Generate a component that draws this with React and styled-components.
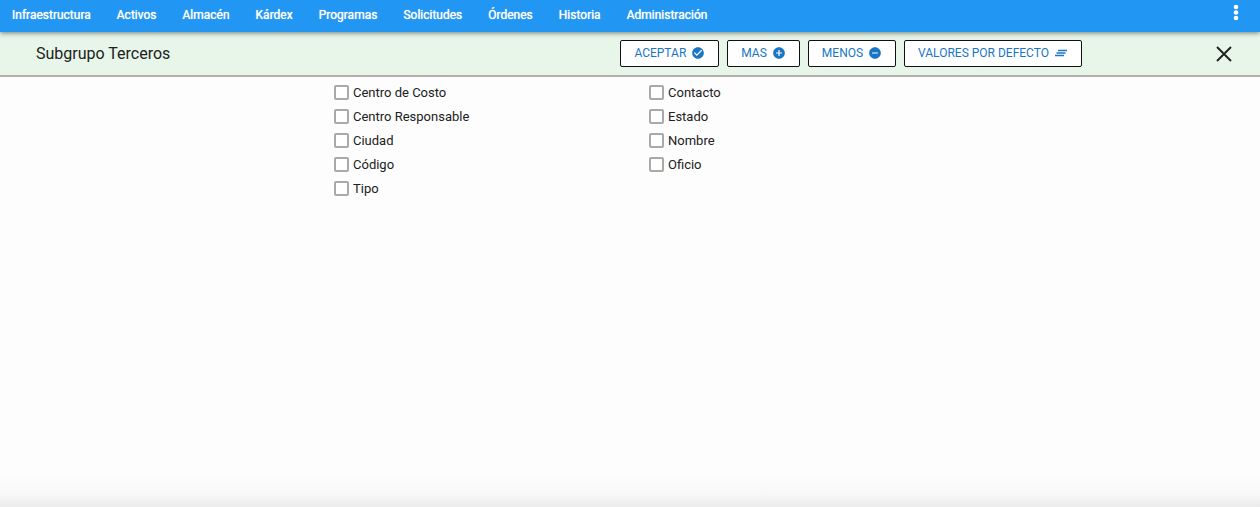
import React from "react";
import styled, { createGlobalStyle } from "styled-components";
import { MdCheckCircle, MdAddCircle, MdRemoveCircle } from "react-icons/md";

const GlobalStyle = createGlobalStyle`
  *, *::before, *::after { box-sizing: border-box; }
  body {
    margin: 0;
    background: #fdfdfd;
    color: #212121;
    font-family: Roboto, "Liberation Sans", sans-serif;
    font-size: 13px;
  }
`;

const Page = styled.div`
  display: flex;
  flex-direction: column;
  min-height: 100vh;
`;

const NavBar = styled.nav`
  position: relative;
  display: flex;
  align-items: center;
  justify-content: space-between;
  height: 32px;
  padding: 0 12px;
  background: #2196f3;
  box-shadow: 0 1px 5px rgba(0, 0, 0, 0.5);
`;

const NavList = styled.ul`
  display: flex;
  gap: 26px;
  margin: 0;
  padding: 0 0 2px;
  list-style: none;
`;

const NavLink = styled.a`
  color: #fff;
  font-size: 12px;
  line-height: 16px;
  text-decoration: none;
  text-shadow: 0 0 1px #fff;
`;

const IconButton = styled.button`
  display: flex;
  align-items: center;
  justify-content: center;
  width: 24px;
  height: 24px;
  padding: 0;
  border: 0;
  background: none;
  color: ${(p) => p.$color};
  cursor: pointer;
`;

const MenuButton = styled(IconButton)`
  margin-bottom: 8px;
`;

const Header = styled.header`
  display: flex;
  align-items: center;
  height: 45px;
  padding: 0 24px 0 36px;
  background: #e7f6e9;
  border-bottom: 2px solid #b5aeae;
`;

const Title = styled.h1`
  flex: 1;
  margin: 0;
  font-size: 16px;
  font-weight: 400;
  line-height: 20px;
`;

const Actions = styled.div`
  display: flex;
  gap: 8px;
  margin-right: 130px;
`;

const ActionButton = styled.button`
  display: flex;
  align-items: center;
  gap: 5px;
  height: 27px;
  padding: 0 13px 1px;
  border: 1px solid #111;
  border-radius: 2px;
  background: #fff;
  color: #1976c5;
  font-family: inherit;
  font-size: 12px;
  line-height: 16px;
  text-transform: uppercase;
  cursor: pointer;

  svg {
    width: 14px;
    height: 14px;
  }
`;

const Options = styled.main`
  display: grid;
  grid-template-columns: 1fr 1fr;
  align-items: start;
  width: 50%;
  margin: 4px auto 0;
`;

const Column = styled.div`
  display: flex;
  flex-direction: column;
  padding-left: 19px;
`;

const Option = styled.label`
  display: flex;
  align-items: center;
  gap: 4px;
  height: 24px;
  line-height: 16px;
`;

const Checkbox = styled.input`
  appearance: none;
  width: 15px;
  height: 15px;
  margin: 0 0 1px;
  border: 2px solid #a9a9a9;
  border-radius: 2px;
  background: #fff;

  &:checked {
    border-color: #1976c5;
    background: #1976c5;
  }
`;

const BottomShade = styled.div`
  height: 32px;
  margin-top: auto;
  background: linear-gradient(to bottom, #fdfdfd, #f8f8f8 60%, #ebebeb);
`;

const DotsIcon = () => (
  <svg width="6" height="18" viewBox="0 0 6 18" fill="currentColor" aria-hidden="true">
    <circle cx="3" cy="4" r="2.3" />
    <circle cx="3" cy="9.5" r="2.3" />
    <circle cx="3" cy="15" r="2.3" />
  </svg>
);

const CloseIcon = () => (
  <svg width="16" height="16" viewBox="0 0 16 16" stroke="currentColor" strokeWidth="1.9" aria-hidden="true">
    <path d="M1 1 15 15M15 1 1 15" />
  </svg>
);

const ClearAllIcon = () => (
  <svg viewBox="0 0 14 14" stroke="currentColor" strokeWidth="1.5" aria-hidden="true">
    <path d="M4 4.5h9M2.5 7h9M1 9.5h9" />
  </svg>
);

const sections = [
  "Infraestructura",
  "Activos",
  "Almacén",
  "Kárdex",
  "Programas",
  "Solicitudes",
  "Órdenes",
  "Historia",
  "Administración",
];

const actions = [
  { label: "Aceptar", Icon: MdCheckCircle },
  { label: "Mas", Icon: MdAddCircle },
  { label: "Menos", Icon: MdRemoveCircle },
  { label: "Valores por defecto", Icon: ClearAllIcon },
];

const columns = [
  ["Centro de Costo", "Centro Responsable", "Ciudad", "Código", "Tipo"],
  ["Contacto", "Estado", "Nombre", "Oficio"],
];

export default function App() {
  return (
    <Page>
      <GlobalStyle />
      <NavBar>
        <NavList>
          {sections.map((name) => (
            <li key={name}>
              <NavLink href="#">{name}</NavLink>
            </li>
          ))}
        </NavList>
        <MenuButton type="button" aria-label="Más opciones" $color="#fff">
          <DotsIcon />
        </MenuButton>
      </NavBar>
      <Header>
        <Title>Subgrupo Terceros</Title>
        <Actions>
          {actions.map(({ label, Icon }) => (
            <ActionButton type="button" key={label}>
              {label}
              <Icon />
            </ActionButton>
          ))}
        </Actions>
        <IconButton type="button" aria-label="Cerrar" $color="#212121">
          <CloseIcon />
        </IconButton>
      </Header>
      <Options>
        {columns.map((names) => (
          <Column key={names[0]}>
            {names.map((name) => (
              <Option key={name}>
                <Checkbox type="checkbox" />
                {name}
              </Option>
            ))}
          </Column>
        ))}
      </Options>
      <BottomShade />
    </Page>
  );
}
